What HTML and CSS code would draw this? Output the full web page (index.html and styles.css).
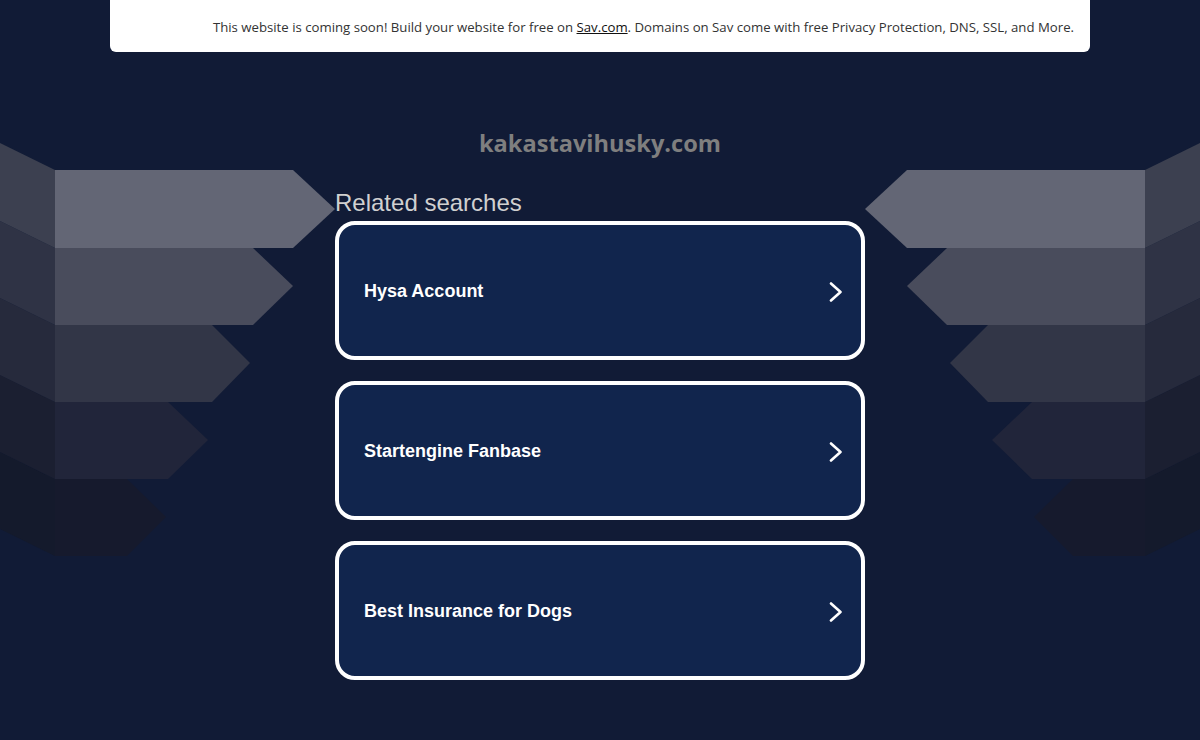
FILE: index.html
```html
<!DOCTYPE html>
<html lang="en">
<head>
    <meta charset="UTF-8">
    <meta name="viewport" content="width=device-width, initial-scale=1.0">
    <title>kakastavihusky.com</title>
    <link rel="stylesheet" href="styles.css">
</head>
<body>
    <svg class="backdrop" width="1200" height="740" viewBox="0 0 1200 740" aria-hidden="true">
        <g id="arrows">
            <polygon points="0,452 55,479 55,556 0,529" fill="#141a2c"/>
            <polygon points="55,479 127,479 166,517 127,556 55,556" fill="#161a2d"/>
            <polygon points="0,375 55,402 55,479 0,452" fill="#1b1f31"/>
            <polygon points="55,402 168,402 208,440 168,479 55,479" fill="#21253a"/>
            <polygon points="0,298 55,325 55,402 0,375" fill="#262a3c"/>
            <polygon points="55,325 212,325 250,363 212,402 55,402" fill="#323647"/>
            <polygon points="0,221 55,248 55,325 0,298" fill="#2f3345"/>
            <polygon points="55,248 253,248 293,286 253,325 55,325" fill="#494c5c"/>
            <polygon points="0,143 55,170 55,248 0,221" fill="#3c4050"/>
            <polygon points="55,170 293,170 335,209 293,248 55,248" fill="#636675"/>
        </g>
        <use href="#arrows" transform="translate(1200,0) scale(-1,1)"/>
    </svg>

    <div class="notice">
        This website is coming soon! Build your website for free on <a href="#">Sav.com</a>. Domains on Sav come with free Privacy Protection, DNS, SSL, and More.
    </div>

    <h1 class="domain">kakastavihusky.com</h1>

    <div class="related">
        <h2>Related searches</h2>
        <a class="search-card" href="#">
            <span>Hysa Account</span>
            <svg width="14" height="20" viewBox="0 0 14 20"><path d="M2 1.5 L11.5 10 L2 18.5" fill="none" stroke="#fff" stroke-width="2.6" stroke-linecap="round" stroke-linejoin="round"/></svg>
        </a>
        <a class="search-card" href="#">
            <span>Startengine Fanbase</span>
            <svg width="14" height="20" viewBox="0 0 14 20"><path d="M2 1.5 L11.5 10 L2 18.5" fill="none" stroke="#fff" stroke-width="2.6" stroke-linecap="round" stroke-linejoin="round"/></svg>
        </a>
        <a class="search-card" href="#">
            <span>Best Insurance for Dogs</span>
            <svg width="14" height="20" viewBox="0 0 14 20"><path d="M2 1.5 L11.5 10 L2 18.5" fill="none" stroke="#fff" stroke-width="2.6" stroke-linecap="round" stroke-linejoin="round"/></svg>
        </a>
    </div>
</body>
</html>
```

FILE: styles.css
```css
html, body {
    margin: 0;
    height: 100%;
}
body {
    background-color: #111b36;
    font-family: "Liberation Sans", Arial, sans-serif;
    overflow: hidden;
    position: relative;
}
.backdrop {
    position: absolute;
    top: 0;
    left: 0;
}
.notice {
    position: relative;
    width: 980px;
    height: 52px;
    margin: 0 auto;
    box-sizing: border-box;
    padding: 18px 16px 0 0;
    background: #fff;
    border-radius: 0 0 6px 6px;
    text-align: right;
    font-family: "Open Sans", sans-serif;
    font-size: 13.2px;
    line-height: 18px;
    color: #333;
}
.notice a {
    color: #111;
    text-decoration: underline;
}
.domain {
    position: relative;
    margin: 75px 0 0;
    text-align: center;
    font-family: "Open Sans", sans-serif;
    font-weight: 700;
    font-size: 23.6px;
    line-height: 32px;
    color: #7f7f7f;
}
.related {
    position: relative;
    width: 530px;
    margin: 30px auto 0;
}
.related h2 {
    margin: 0 0 4px;
    font-weight: 400;
    font-size: 24px;
    line-height: 28px;
    color: #d0d0d0;
}
.search-card {
    display: flex;
    align-items: center;
    justify-content: space-between;
    height: 139px;
    box-sizing: border-box;
    margin-bottom: 21px;
    padding: 2px 18px 0 25px;
    background: #11254d;
    border: 4px solid #fff;
    border-radius: 20px;
    color: #fff;
    font-weight: 700;
    font-size: 18px;
    text-decoration: none;
}
```
